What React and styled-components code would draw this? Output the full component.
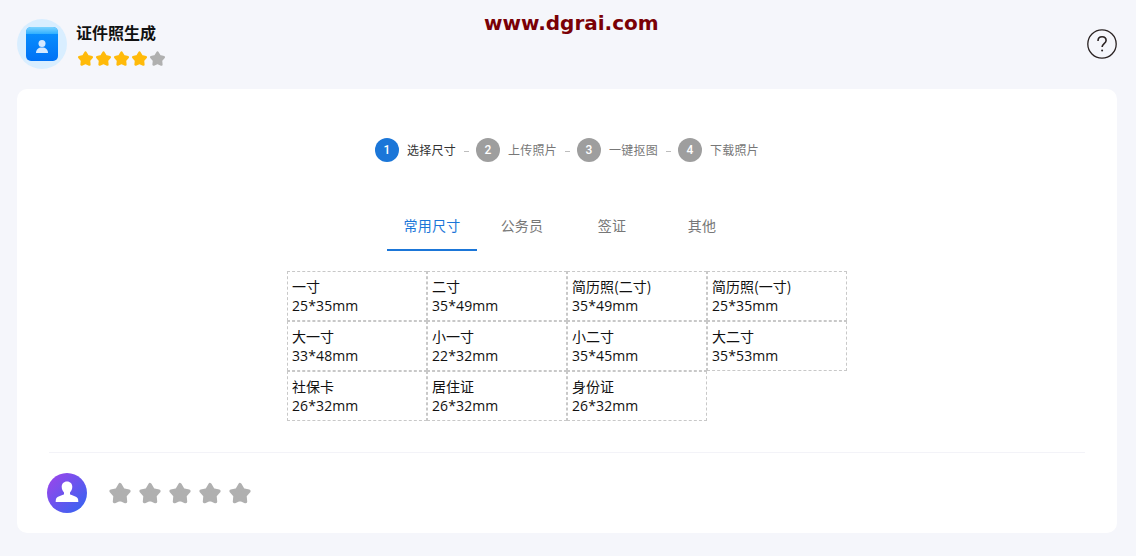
import React from 'react';
import styled, { createGlobalStyle } from 'styled-components';

const GlobalStyle = createGlobalStyle`
  html, body {
    margin: 0;
    padding: 0;
    background: #f5f6fb;
    font-family: "Open Sans", "Noto Sans CJK SC", sans-serif;
  }
`;

const Page = styled.div`
  position: relative;
  width: 1136px;
  height: 556px;
  overflow: hidden;
  background: #f5f6fb;
  padding: 19px 19px 0 17px;
  box-sizing: border-box;
`;

const Watermark = styled.div`
  position: absolute;
  top: 8px;
  left: 484px;
  font-family: "DejaVu Sans", sans-serif;
  font-weight: 700;
  font-size: 20px;
  line-height: 30px;
  letter-spacing: 0;
  color: #7a0006;
  white-space: nowrap;
`;

const Header = styled.header`
  display: flex;
  align-items: center;
  justify-content: space-between;
  height: 50px;
  margin-bottom: 20px;
`;

const AppInfo = styled.div`
  display: flex;
  align-items: center;
  gap: 9px;
`;

const AppIcon = styled.div`
  width: 50px;
  height: 50px;
  border-radius: 50%;
  background: #d9eeff;
  display: flex;
  align-items: center;
  justify-content: center;
`;

const AppText = styled.div`
  display: flex;
  flex-direction: column;
  gap: 6px;
  margin-top: -1px;
`;

const AppTitle = styled.div`
  font-family: "Noto Sans CJK SC", sans-serif;
  font-size: 16px;
  font-weight: 700;
  line-height: 24px;
  color: #111;
`;

const Stars = styled.div`
  display: flex;
  gap: ${props => props.$gap}px;
  margin-left: ${props => props.$offset || 0}px;
`;

const HelpButton = styled.div`
  display: flex;
`;

const Card = styled.main`
  width: 1100px;
  height: 444px;
  background: #fff;
  border-radius: 10px;
  padding: 48px 32px 0;
  box-sizing: border-box;
`;

const Steps = styled.div`
  display: flex;
  justify-content: center;
  align-items: center;
  height: 26px;
`;

const StepCircle = styled.div`
  width: 24px;
  height: 24px;
  border-radius: 50%;
  background: ${props => (props.$active ? '#1b76d8' : '#9e9e9e')};
  color: #fff;
  font-family: Roboto, sans-serif;
  font-size: 12px;
  font-weight: 500;
  display: flex;
  align-items: center;
  justify-content: center;
  margin-right: 8px;
`;

const StepLabel = styled.div`
  font-family: "Noto Sans CJK SC", sans-serif;
  font-size: 12px;
  line-height: 18px;
  letter-spacing: 0.25px;
  color: ${props => (props.$active ? '#333' : '#777')};
`;

const StepDash = styled.div`
  width: 5px;
  height: 1px;
  background: #bdbdbd;
  margin: 2px 7px 0 8px;
`;

const Tabs = styled.div`
  display: flex;
  justify-content: center;
  margin-top: 38px;
`;

const Tab = styled.div`
  width: 90px;
  height: 50px;
  box-sizing: border-box;
  padding-top: 4px;
  text-align: center;
  font-family: "Noto Sans CJK SC", sans-serif;
  font-size: 14px;
  letter-spacing: 0.25px;
  line-height: 40px;
  color: ${props => (props.$active ? '#1b76d8' : '#777')};
  border-bottom: 2px solid ${props => (props.$active ? '#1b76d8' : 'transparent')};
`;

const SizeGrid = styled.div`
  display: grid;
  grid-template-columns: repeat(4, 140px);
  grid-auto-rows: 50px;
  width: 560px;
  margin: 20px 0 0 238px;
`;

const SizeCell = styled.div`
  box-sizing: border-box;
  border: 1px dashed #c8c8c8;
  padding: 5px 4px 0;
  font-size: 14px;
  line-height: 19px;
  color: #111;
`;

const SizeName = styled.div`
  font-family: "Noto Sans CJK SC", sans-serif;
`;

const SizeValue = styled.div`
  font-family: "Open Sans", sans-serif;
  letter-spacing: 0.1px;
`;

const Divider = styled.hr`
  border: 0;
  height: 1px;
  background: #f3f3f8;
  margin: 31px 0 0;
`;

const Feedback = styled.div`
  display: flex;
  align-items: center;
  gap: 21px;
  margin: 20px 0 0 -2px;
`;

const Avatar = styled.div`
  width: 40px;
  height: 40px;
  border-radius: 50%;
  background: linear-gradient(135deg, #a243ea, #2f66f2);
  display: flex;
  align-items: center;
  justify-content: center;
`;

const StarIcon = ({ size, color }) => (
  <svg width={size} height={size} viewBox="0 0 24 24">
    <path
      d="M12 3.600 15.060 8.790 20.940 10.100 16.950 14.610 17.530 20.600 12 18.200 6.470 20.600 7.050 14.610 3.060 10.100 8.940 8.790Z"
      fill={color}
      stroke={color}
      strokeWidth="3.400"
      strokeLinejoin="round"
    />
  </svg>
);

const steps = ['选择尺寸', '上传照片', '一键抠图', '下载照片'];
const tabs = ['常用尺寸', '公务员', '签证', '其他'];
const sizes = [
  ['一寸', '25*35mm'],
  ['二寸', '35*49mm'],
  ['简历照(二寸)', '35*49mm'],
  ['简历照(一寸)', '25*35mm'],
  ['大一寸', '33*48mm'],
  ['小一寸', '22*32mm'],
  ['小二寸', '35*45mm'],
  ['大二寸', '35*53mm'],
  ['社保卡', '26*32mm'],
  ['居住证', '26*32mm'],
  ['身份证', '26*32mm'],
];

export default function App() {
  return (
    <Page>
      <GlobalStyle />
      <Watermark>www.dgrai.com</Watermark>
      <Header>
        <AppInfo>
          <AppIcon>
            <svg width="32" height="34" viewBox="0 0 32 34">
              <defs>
                <linearGradient id="cardBlue" x1="0" y1="0" x2="0" y2="1">
                  <stop offset="0" stopColor="#0a94ff" />
                  <stop offset="1" stopColor="#0071f5" />
                </linearGradient>
                <linearGradient id="cardTop" x1="0" y1="0" x2="0" y2="1">
                  <stop offset="0" stopColor="#7fd4ff" />
                  <stop offset="1" stopColor="#2fb0ff" />
                </linearGradient>
              </defs>
              <rect width="32" height="34" rx="5" fill="url(#cardBlue)" />
              <path d="M0 7V5a5 5 0 0 1 5-5h22a5 5 0 0 1 5 5v2Z" fill="url(#cardTop)" />
              <circle cx="16" cy="16.500" r="3.500" fill="#d5e9ff" />
              <path d="M10 26c0-3.500 2.300-5.500 6-5.500s6 2 6 5.500Z" fill="#d5e9ff" />
            </svg>
          </AppIcon>
          <AppText>
            <AppTitle>证件照生成</AppTitle>
            <Stars $gap={1} $offset={1}>
              {[0, 1, 2, 3, 4].map(i => (
                <StarIcon key={i} size={17} color={i < 4 ? '#ffba0a' : '#b0b0b0'} />
              ))}
            </Stars>
          </AppText>
        </AppInfo>
        <HelpButton>
          <svg width="30" height="30" viewBox="0 0 30 30" fill="none" stroke="#2a2222">
            <circle cx="15" cy="15" r="14.2" strokeWidth="1.3" />
            <path d="M11 12c0-2.600 1.800-4.200 4.100-4.200s4 1.600 4 3.800c0 3-4 3.200-4 6.400" strokeWidth="1.600" />
            <circle cx="15.100" cy="21.500" r="1" fill="#2a2222" stroke="none" />
          </svg>
        </HelpButton>
      </Header>
      <Card>
        <Steps>
          {steps.map((label, i) => (
            <React.Fragment key={label}>
              <StepCircle $active={i === 0}>{i + 1}</StepCircle>
              <StepLabel $active={i === 0}>{label}</StepLabel>
              {i < steps.length - 1 && <StepDash />}
            </React.Fragment>
          ))}
        </Steps>
        <Tabs>
          {tabs.map((label, i) => (
            <Tab key={label} $active={i === 0}>{label}</Tab>
          ))}
        </Tabs>
        <SizeGrid>
          {sizes.map(([name, value]) => (
            <SizeCell key={name}>
              <SizeName>{name}</SizeName>
              <SizeValue>{value}</SizeValue>
            </SizeCell>
          ))}
        </SizeGrid>
        <Divider />
        <Feedback>
          <Avatar>
            <svg width="24" height="24" viewBox="0 0 24 24" fill="#fff">
              <path d="M12 0.500c3.300 0 5.300 2.300 5.300 5.300 0 2.400-1 4.400-2.300 5.700v1.800c1.500 1.200 6.800 1.800 7.800 4.200 .4 1 .5 2 .5 3.500H.7c0-1.500.1-2.500.5-3.500 1-2.400 6.300-3 7.800-4.200v-1.800c-1.300-1.300-2.300-3.300-2.300-5.700 0-3 2-5.300 5.300-5.300Z" />
            </svg>
          </Avatar>
          <Stars $gap={6}>
            {[0, 1, 2, 3, 4].map(i => (
              <StarIcon key={i} size={24} color="#b0b0b0" />
            ))}
          </Stars>
        </Feedback>
      </Card>
    </Page>
  );
}
